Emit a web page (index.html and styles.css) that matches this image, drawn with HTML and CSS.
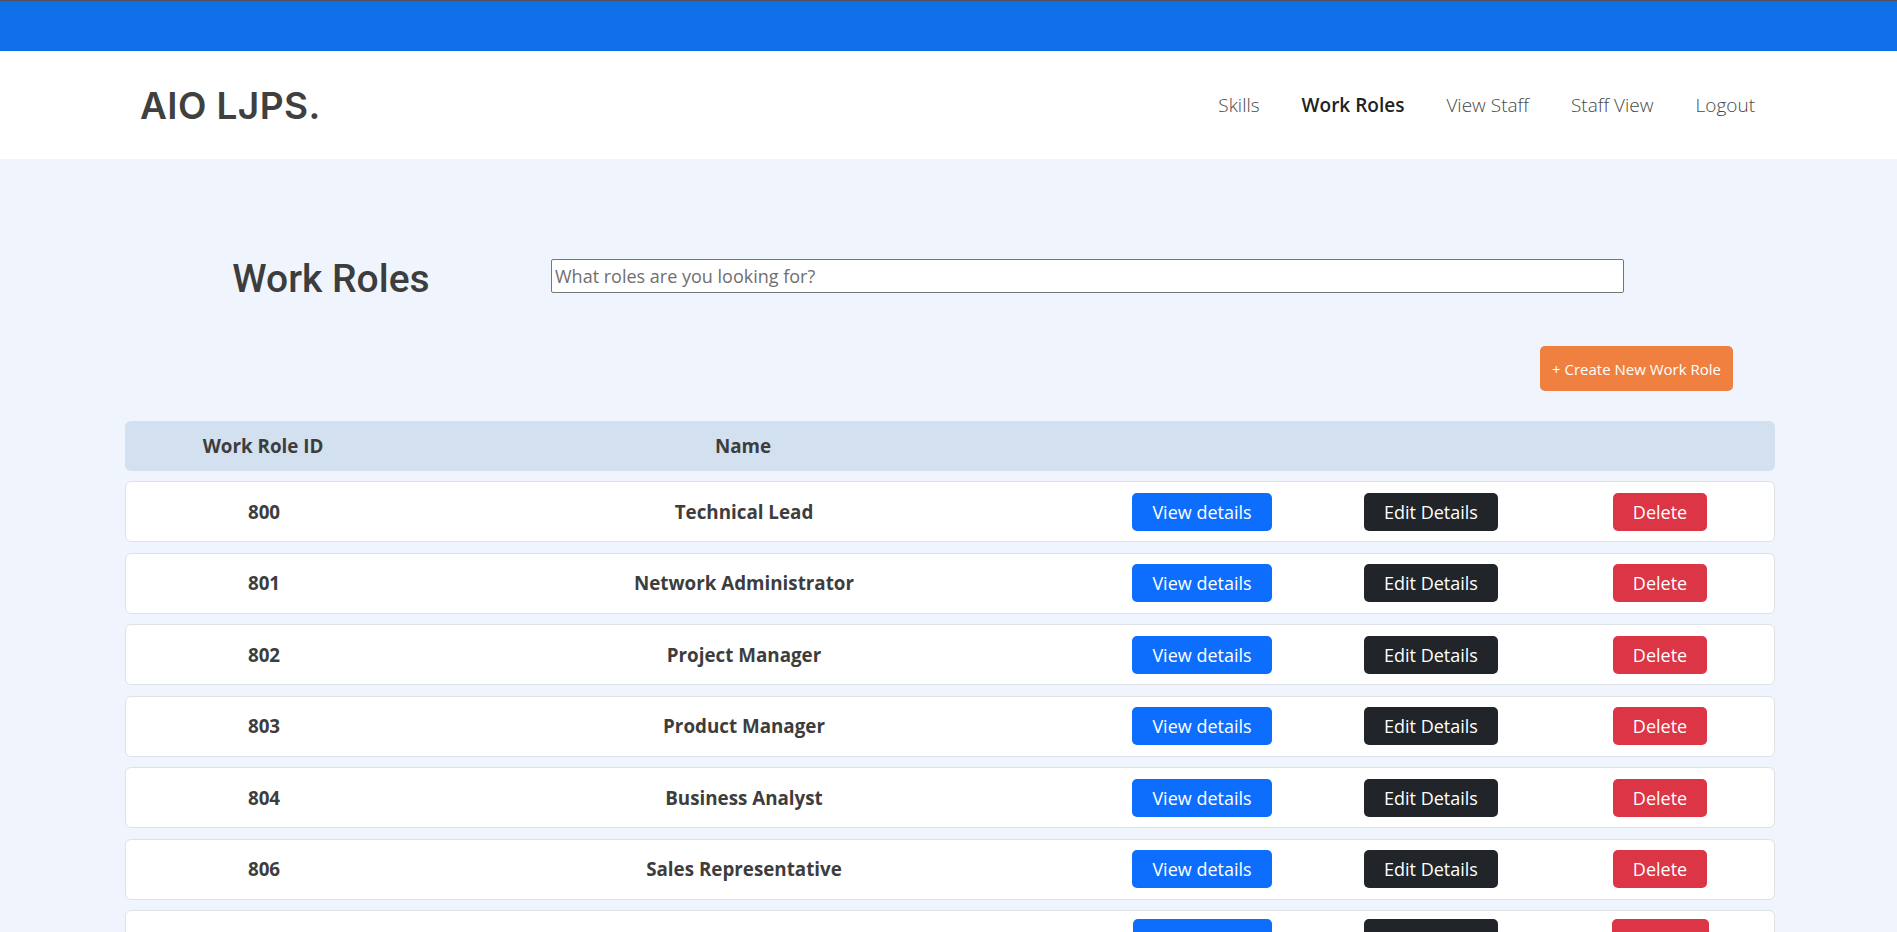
FILE: index.html
```html
<!DOCTYPE html>
<html lang="en">
<head>
<meta charset="utf-8">
<title>Work Roles</title>
<link rel="stylesheet" href="styles.css">
</head>
<body>
<div class="topbar"></div>
<header class="navbar">
  <div class="logo">AIO LJPS.</div>
  <nav class="nav">
    <a class="nav-link" href="#">Skills</a>
    <a class="nav-link active" href="#">Work Roles</a>
    <a class="nav-link" href="#">View Staff</a>
    <a class="nav-link" href="#">Staff View</a>
    <a class="nav-link" href="#">Logout</a>
  </nav>
</header>
<main class="content">
  <div class="search-row">
    <h1 class="title">Work Roles</h1>
    <input class="search" type="text" placeholder="What roles are you looking for?">
  </div>
  <div class="actions">
    <button class="btn btn-create">+ Create New Work Role</button>
  </div>
  <div class="table">
    <div class="thead">
      <div class="cell">Work Role ID</div>
      <div class="cell">Name</div>
      <div class="cell"></div>
      <div class="cell"></div>
      <div class="cell"></div>
    </div>
    <div class="trow">
      <div class="cell">800</div><div class="cell">Technical Lead</div>
      <div class="cell"><button class="btn btn-view">View details</button></div>
      <div class="cell"><button class="btn btn-edit">Edit Details</button></div>
      <div class="cell"><button class="btn btn-delete">Delete</button></div>
    </div>
    <div class="trow">
      <div class="cell">801</div><div class="cell">Network Administrator</div>
      <div class="cell"><button class="btn btn-view">View details</button></div>
      <div class="cell"><button class="btn btn-edit">Edit Details</button></div>
      <div class="cell"><button class="btn btn-delete">Delete</button></div>
    </div>
    <div class="trow">
      <div class="cell">802</div><div class="cell">Project Manager</div>
      <div class="cell"><button class="btn btn-view">View details</button></div>
      <div class="cell"><button class="btn btn-edit">Edit Details</button></div>
      <div class="cell"><button class="btn btn-delete">Delete</button></div>
    </div>
    <div class="trow">
      <div class="cell">803</div><div class="cell">Product Manager</div>
      <div class="cell"><button class="btn btn-view">View details</button></div>
      <div class="cell"><button class="btn btn-edit">Edit Details</button></div>
      <div class="cell"><button class="btn btn-delete">Delete</button></div>
    </div>
    <div class="trow">
      <div class="cell">804</div><div class="cell">Business Analyst</div>
      <div class="cell"><button class="btn btn-view">View details</button></div>
      <div class="cell"><button class="btn btn-edit">Edit Details</button></div>
      <div class="cell"><button class="btn btn-delete">Delete</button></div>
    </div>
    <div class="trow">
      <div class="cell">806</div><div class="cell">Sales Representative</div>
      <div class="cell"><button class="btn btn-view">View details</button></div>
      <div class="cell"><button class="btn btn-edit">Edit Details</button></div>
      <div class="cell"><button class="btn btn-delete">Delete</button></div>
    </div>
    <div class="trow">
      <div class="cell"></div><div class="cell"></div>
      <div class="cell"><button class="btn btn-view" aria-label="View details"></button></div>
      <div class="cell"><button class="btn btn-edit" aria-label="Edit Details"></button></div>
      <div class="cell"><button class="btn btn-delete" aria-label="Delete"></button></div>
    </div>
  </div>
</main>
</body>
</html>
```

FILE: styles.css
```css
* { box-sizing: border-box; }
html, body { margin: 0; padding: 0; }
body {
  background: #f0f5fd;
  font-family: "Open Sans", "Noto Sans", Arial, sans-serif;
  color: #3d3d3d;
  overflow: hidden;
}
.topbar {
  height: 51px;
  background: #0f6fe8;
  border-top: 1px solid #4f5257;
}
.navbar {
  height: 108px;
  background: #ffffff;
  display: flex;
  align-items: center;
  justify-content: space-between;
  padding: 0 121px 0 140px;
}
.logo {
  font-family: "Inter", "Liberation Sans", sans-serif;
  font-weight: 600;
  font-size: 37px;
  letter-spacing: 0.4px;
  color: #404040;
}
.nav { display: flex; align-items: center; }
.nav-link {
  padding: 0 21px;
  font-size: 19px;
  font-weight: 300;
  color: #474747;
  text-decoration: none;
}
.nav-link.active { font-weight: 600; color: #222; }
.content { padding: 0 122px 0 125px; }
.search-row {
  display: flex;
  align-items: flex-start;
  margin-top: 100px;
}
.title {
  width: 412px;
  margin: -3px 0 0 0;
  text-align: center;
  font-family: "Roboto", sans-serif;
  font-weight: 500;
  font-size: 39px;
  line-height: 46px;
  color: #3d3d3d;
}
.search {
  width: 1073px;
  height: 34px;
  margin-left: 14px;
  border: 1px solid #767676;
  border-radius: 2px;
  padding: 0 3px;
  font-family: "Open Sans", sans-serif;
  font-size: 18px;
  background: #fff;
}
.search::placeholder { color: #6f6f6f; }
.actions {
  display: flex;
  justify-content: flex-end;
  padding-right: 42px;
  margin-top: 44px;
}
.btn {
  border: none;
  font-family: "Open Sans", "Noto Sans", sans-serif;
  color: #fff;
  cursor: pointer;
}
.btn-create {
  height: 45px;
  padding: 0 12px;
  font-size: 15px;
  background: #ef8040;
  border-radius: 5px;
}
.table {
  margin-top: 30px;
  display: flex;
  flex-direction: column;
  gap: 10.5px;
}
.thead, .trow {
  display: grid;
  grid-template-columns: 276px 684px 232px 226px 232px;
  align-items: center;
  border-radius: 6px;
}
.thead {
  height: 50px;
  background: #d3e0ef;
  margin-bottom: -0.5px;
}
.trow {
  height: 61px;
  background: #fff;
  border: 1px solid #dee2e6;
}
.cell {
  text-align: center;
  font-size: 18.8px;
  font-weight: 700;
  color: #3d3d3d;
}
.trow .btn {
  height: 38px;
  padding: 0 20px;
  font-size: 18px;
  font-weight: 400;
  border-radius: 5px;
}
.trow .btn:empty { width: 139px; }
.trow .btn-edit:empty { width: 134px; }
.trow .btn-delete:empty { width: 97px; }
.btn-view { background: #0d6efd; }
.btn-edit { background: #212529; }
.btn-delete { background: #dc3545; }
```
